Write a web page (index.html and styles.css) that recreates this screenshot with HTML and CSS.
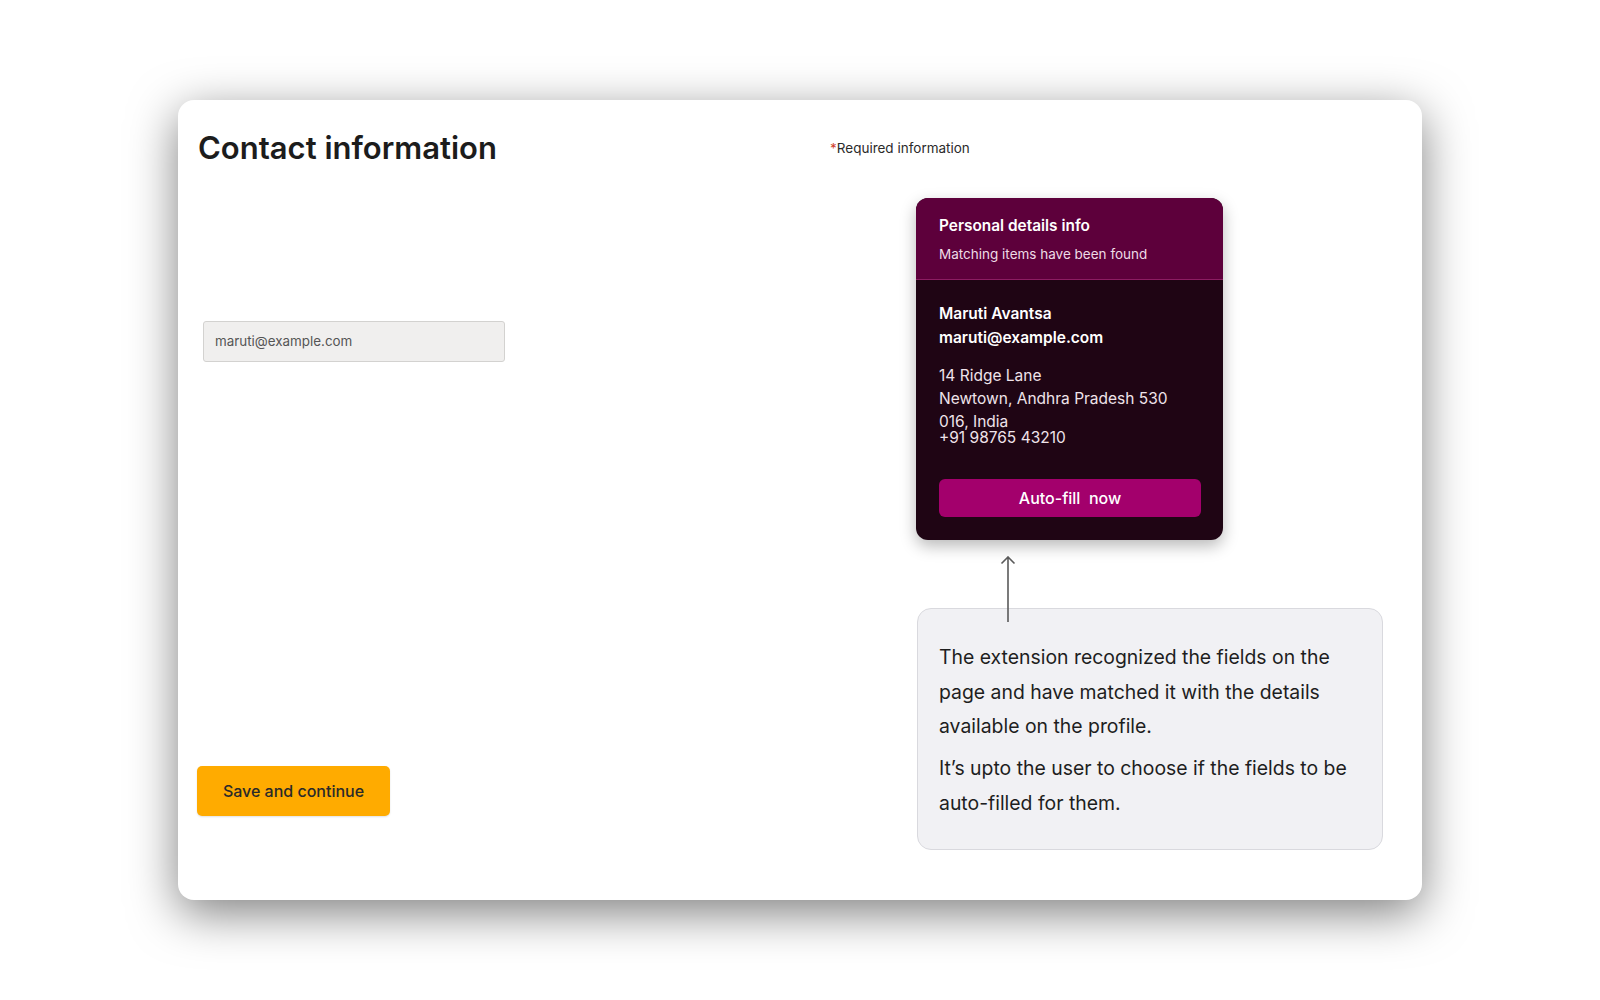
FILE: index.html
```html
<!DOCTYPE html>
<html lang="en">
<head>
<meta charset="utf-8">
<title>Contact information</title>
<link rel="stylesheet" href="styles.css">
</head>
<body>
<main class="card">
  <section class="left">
    <h1 class="title">Contact information</h1>
    <div class="input">maruti@example.com</div>
    <button class="save">Save and continue</button>
  </section>
  <section class="right">
    <p class="required"><span class="star">*</span>Required information</p>
    <div class="popup">
      <div class="popup-head">
        <div class="popup-title">Personal details info</div>
        <div class="popup-sub">Matching items have been found</div>
      </div>
      <div class="popup-body">
        <div class="name">Maruti Avantsa</div>
        <div class="name">maruti@example.com</div>
        <div class="addr">14 Ridge Lane<br>Newtown, Andhra Pradesh 530<br>016, India</div>
        <div class="phone">+91 98765 43210</div>
        <button class="autofill">Auto-fill&nbsp; now</button>
      </div>
    </div>
    <svg class="arrow" width="20" height="66" viewBox="0 0 20 66">
      <path d="M10 1 V66 M3.5 7.5 L10 1 L16.5 7.5" fill="none" stroke="#5a5a5a" stroke-width="1.6"/>
    </svg>
    <div class="note">
      <p>The extension recognized the fields on the page and have matched it with the details available on the profile.</p>
      <p>It’s upto the user to choose if the fields to be auto-filled for them.</p>
    </div>
  </section>
</main>
</body>
</html>
```
FILE: styles.css
```css
* { box-sizing: border-box; }
html, body { margin: 0; padding: 0; background: #fff; }
body {
  font-family: Inter, "Noto Sans", "Liberation Sans", sans-serif;
  color: #1d1d1f;
  padding: 100px 0 0 178px;
  min-height: 1000px;
  overflow: hidden;
}
.card {
  width: 1244px;
  height: 800px;
  background: #fff;
  border-radius: 16px;
  box-shadow: 0 13px 48px rgba(0,0,0,0.5);
  display: flex;
  padding: 0 0 0 19px;
}
.left {
  width: 633px;
  display: flex;
  flex-direction: column;
  align-items: flex-start;
}
.title {
  margin: 28px 0 0 1px;
  font-size: 31px;
  line-height: 40px;
  font-weight: 600;
  color: #1c1c1c;
}
.input {
  margin: 153px 0 0 6px;
  width: 302px;
  height: 41px;
  background: #f0efee;
  border: 1px solid #d3d2d0;
  border-radius: 3px;
  padding: 0 11px;
  font-size: 13.4px;
  line-height: 39px;
  color: #555;
}
.save {
  margin-top: 404px;
  width: 193px;
  height: 50px;
  background: #ffab00;
  border: none;
  border-radius: 5px;
  font-family: inherit;
  font-size: 16px;
  font-weight: 500;
  color: #2a2a2a;
  box-shadow: 0 1px 2px rgba(0,0,0,0.12);
}
.right {
  display: flex;
  flex-direction: column;
}
.required {
  margin: 39px 0 0 0;
  font-size: 13.5px;
  line-height: 18px;
  color: #2b2b2b;
}
.star { color: #d0402b; }
.popup {
  margin: 41px 0 0 86px;
  width: 307px;
  border-radius: 12px;
  overflow: hidden;
  background: #1f0514;
  box-shadow: 0 6px 16px rgba(0,0,0,0.28);
  color: #f3eaf0;
}
.popup-head {
  background: #5d003b;
  padding: 18px 22px 15px 23px;
  border-bottom: 1px solid #8c1d62;
}
.popup-title {
  font-size: 15.4px;
  line-height: 20px;
  font-weight: 600;
  color: #fff;
}
.popup-sub {
  margin-top: 8px;
  font-size: 13.5px;
  line-height: 20px;
  color: #eedbe6;
}
.popup-body {
  padding: 22px 22px 23px 23px;
}
.name {
  font-size: 15.5px;
  line-height: 24px;
  font-weight: 600;
  color: #fff;
}
.addr {
  margin-top: 14px;
  font-size: 15.5px;
  line-height: 23px;
  color: #efe3ea;
}
.phone {
  margin-top: -3px;
  font-size: 15.5px;
  line-height: 16px;
  color: #efe3ea;
}
.autofill {
  display: block;
  margin-top: 33px;
  width: 262px;
  height: 38px;
  background: #a3006c;
  border: none;
  border-radius: 6px;
  font-family: inherit;
  font-size: 16px;
  font-weight: 500;
  color: #fff;
}
.arrow {
  display: block;
  margin: 16px 0 -14px 168px;
  position: relative;
  z-index: 2;
}
.note {
  margin-left: 87px;
  width: 466px;
  height: 242px;
  background: #f1f1f4;
  border: 1px solid #d9d9de;
  border-radius: 14px;
  padding: 31px 22px 0 21px;
  font-size: 19.4px;
  line-height: 34.5px;
  color: #1e1e1e;
}
.note p { margin: 0; }
.note p + p { margin-top: 7.5px; }
```
